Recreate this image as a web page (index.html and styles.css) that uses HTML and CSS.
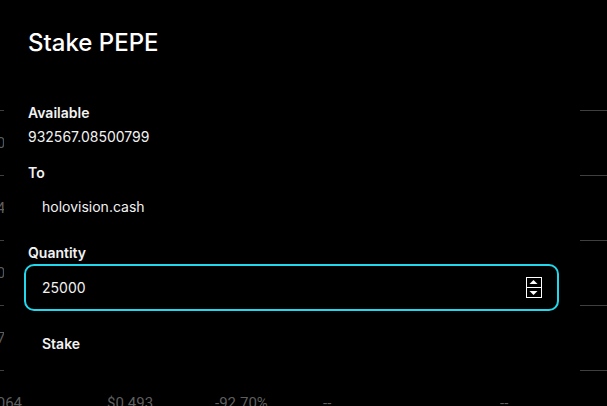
FILE: index.html
```html
<!DOCTYPE html>
<html lang="en">
<head>
  <meta charset="UTF-8" />
  <meta name="viewport" content="width=device-width,initial-scale=1.0"/>
  <title>Stake PEPE</title>
  <link rel="stylesheet" href="styles.css">
</head>
<body>

<!-- table behind the dialog -->
<div class="page">
  <div class="row"><span class="num"><span>3.05012</span></span><span>$1.204</span><span>+1.20%</span><span>--</span><span>--</span></div>
  <div class="row"><span class="num"><span>0.00412</span></span><span>$0.031</span><span>-4.10%</span><span>--</span><span>--</span></div>
  <div class="row"><span class="num"><span>12.2058</span></span><span>$2.870</span><span>+0.52%</span><span>--</span><span>--</span></div>
  <div class="row"><span class="num"><span>0.01732</span></span><span>$0.118</span><span>-12.4%</span><span>--</span><span>--</span></div>
  <div class="row"><span class="num"><span>0.00064</span></span><span>$0.493</span><span>-92.70%</span><span>--</span><span>--</span></div>
</div>

<div class="modal">
  <h2 class="title">Stake PEPE</h2>

  <div class="group">
    <div class="label">Available</div>
    <div class="plain">932567.08500799</div>
  </div>

  <div class="group to">
    <div class="label">To</div>
    <div class="box">holovision.cash</div>
  </div>

  <div class="group qty">
    <div class="label">Quantity</div>
    <div class="box input">
      <span>25000</span>
      <svg class="spin" width="16" height="21" viewBox="0 0 16 21">
        <rect x="0.5" y="0.5" width="15" height="20" fill="none" stroke="#fff"/>
        <line x1="0" y1="10.5" x2="16" y2="10.5" stroke="#fff"/>
        <polygon points="3.5,7 11.5,7 7.5,3" fill="#fff"/>
        <polygon points="3.5,14 11.5,14 7.5,18" fill="#fff"/>
      </svg>
    </div>
  </div>

  <button class="box stake">Stake</button>
</div>

</body>
</html>
```

FILE: styles.css
```css
:root {
  --line: #3f3f3f;
  --muted: #5e5e5e;
  --accent: #22d8ec;
}

html, body {
  margin: 0;
  padding: 0;
  height: 100%;
  overflow: hidden;
  background: #000;
  font-family: Inter, 'Noto Sans', sans-serif;
}

.page {
  height: 100%;
  box-sizing: border-box;
  overflow: hidden;
  padding-top: 110px;
  color: var(--muted);
  font-family: Roboto, sans-serif;
  font-size: 15px;
}

.row {
  display: grid;
  grid-template-columns: 107px 108px 108px 177px 1fr;
  align-items: center;
  height: 64px;
  border-top: 1px solid var(--line);
  white-space: nowrap;
}

.num {
  display: flex;
  justify-content: flex-end;
  width: 22px;
}

.modal {
  position: absolute;
  left: 4px;
  top: 0;
  width: 576px;
  height: 384px;
  box-sizing: border-box;
  padding: 27px 21px 0 20px;
  background: #000;
  color: #f2f2f2;
  font-size: 14px;
  line-height: 20px;
}

.title {
  margin: 0 0 44px 4px;
  font-size: 24px;
  line-height: 32px;
  font-weight: 500;
  color: #fff;
}

.group {
  margin-bottom: 16px;
}

.group.to {
  margin-bottom: 13px;
}

.group.qty {
  margin-bottom: 0;
}

.label {
  padding-left: 4px;
  font-weight: 600;
}

.plain {
  margin-top: 4px;
  padding-left: 4px;
}

.box {
  display: flex;
  align-items: center;
  justify-content: space-between;
  margin-top: 1px;
  padding: 11px 15px 11px 16px;
  border: 2px solid transparent;
  border-radius: 10px;
}

.input {
  border-color: var(--accent);
}

.spin {
  display: block;
}

.stake {
  margin-top: 10px;
  background: none;
  color: #f2f2f2;
  font: inherit;
  font-weight: 600;
  line-height: 20px;
  cursor: pointer;
}
```
